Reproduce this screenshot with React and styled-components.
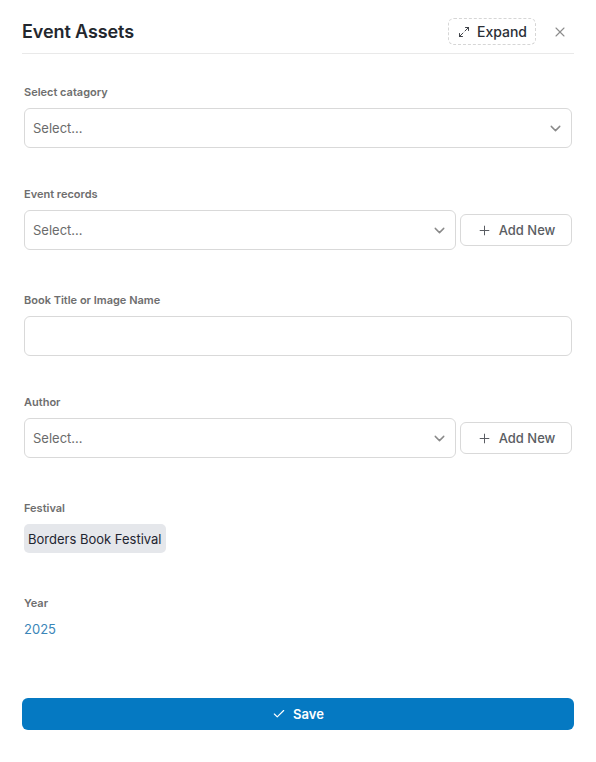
import React from 'react';
import styled, { createGlobalStyle } from 'styled-components';
import { Maximize2, X, ChevronDown, Plus, Check } from 'lucide-react';

const GlobalStyle = createGlobalStyle`
  body {
    margin: 0;
    background: #fff;
    font-family: Inter, "Liberation Sans", Arial, sans-serif;
    color: #1f2328;
  }
`;

const Panel = styled.div`
  width: 596px;
  padding: 0 22px;
  box-sizing: border-box;
`;

const Header = styled.div`
  display: flex;
  align-items: center;
  justify-content: space-between;
  height: 54px;
  padding-top: 10px;
  box-sizing: border-box;
  border-bottom: 1px solid #e9e9e9;
`;

const Title = styled.h2`
  margin: 0;
  font-size: 18px;
  font-weight: 600;
  color: #23272e;
  letter-spacing: -0.1px;
`;

const HeaderActions = styled.div`
  display: flex;
  align-items: center;
  gap: 16px;
  margin-right: 6px;
`;

const ExpandButton = styled.button`
  display: flex;
  align-items: center;
  gap: 7px;
  height: 27px;
  padding: 0 8px 0 9px;
  border: 1px dashed #d6d6d6;
  border-radius: 6px;
  background: #fff;
  font: inherit;
  font-size: 14px;
  font-weight: 500;
  color: #2b2f36;
  cursor: pointer;
`;

const CloseButton = styled.button`
  display: flex;
  padding: 0;
  border: none;
  background: none;
  color: #8c8c8c;
  cursor: pointer;
`;

const Form = styled.div`
  padding: 30px 2px 0;
`;

const FormItem = styled.div`
  margin-bottom: ${p => p.$space}px;
`;

const Label = styled.div`
  font-size: 11px;
  line-height: 16px;
  font-weight: 600;
  color: #6e6e6e;
  margin-bottom: 8px;
`;

const Row = styled.div`
  display: flex;
  align-items: center;
  gap: 4px;
`;

const SelectBox = styled.div`
  flex: 1;
  display: flex;
  align-items: center;
  justify-content: space-between;
  height: 40px;
  padding: 0 7px 0 8px;
  box-sizing: border-box;
  border: 1px solid #d9d9d9;
  border-radius: 6px;
  font-size: 13px;
  color: #6b6b6b;
  background: #fff;
`;

const TextInput = styled.input`
  display: block;
  width: 100%;
  height: 40px;
  box-sizing: border-box;
  border: 1px solid #d9d9d9;
  border-radius: 6px;
  padding: 0 8px;
  font: inherit;
  font-size: 13px;
  outline: none;
`;

const AddButton = styled.button`
  display: flex;
  align-items: center;
  justify-content: center;
  gap: 7px;
  width: 112px;
  height: 32px;
  border: 1px solid #d9d9d9;
  border-radius: 6px;
  background: #fff;
  font: inherit;
  font-size: 13px;
  font-weight: 500;
  color: #5a5d63;
  cursor: pointer;
`;

const Tag = styled.span`
  display: inline-flex;
  align-items: center;
  height: 29px;
  padding: 0 4px;
  border-radius: 5px;
  background: #e5e7eb;
  font-size: 13px;
  color: #1f2530;
`;

const YearValue = styled.div`
  font-size: 13px;
  line-height: 20px;
  color: #3a86b8;
`;

const SaveButton = styled.button`
  display: flex;
  align-items: center;
  justify-content: center;
  gap: 7px;
  width: 100%;
  height: 32px;
  margin-top: 59px;
  border: none;
  border-radius: 6px;
  background: #0579c2;
  color: #fff;
  font: inherit;
  font-size: 13px;
  font-weight: 600;
  cursor: pointer;
`;

const Select = ({ placeholder = 'Select...' }) => (
  <SelectBox>
    <span>{placeholder}</span>
    <ChevronDown size={17} strokeWidth={2} color="#8a8a8a" />
  </SelectBox>
);

const AddNew = () => (
  <AddButton>
    <Plus size={15} strokeWidth={1.6} color="#5a5d63" />
    Add New
  </AddButton>
);

export default function App() {
  return (
    <>
      <GlobalStyle />
      <Panel>
        <Header>
          <Title>Event Assets</Title>
          <HeaderActions>
            <ExpandButton>
              <Maximize2 size={12} strokeWidth={1.8} />
              Expand
            </ExpandButton>
            <CloseButton>
              <X size={16} strokeWidth={1.6} />
            </CloseButton>
          </HeaderActions>
        </Header>

        <Form>
          <FormItem $space={38}>
            <Label>Select catagory</Label>
            <Select />
          </FormItem>

          <FormItem $space={42}>
            <Label>Event records</Label>
            <Row>
              <Select />
              <AddNew />
            </Row>
          </FormItem>

          <FormItem $space={38}>
            <Label>Book Title or Image Name</Label>
            <TextInput />
          </FormItem>

          <FormItem $space={42}>
            <Label>Author</Label>
            <Row>
              <Select />
              <AddNew />
            </Row>
          </FormItem>

          <FormItem $space={42}>
            <Label>Festival</Label>
            <Tag>Borders Book Festival</Tag>
          </FormItem>

          <FormItem $space={0}>
            <Label>Year</Label>
            <YearValue>2025</YearValue>
          </FormItem>
        </Form>

        <SaveButton>
          <Check size={14} strokeWidth={2} />
          Save
        </SaveButton>
      </Panel>
    </>
  );
}
